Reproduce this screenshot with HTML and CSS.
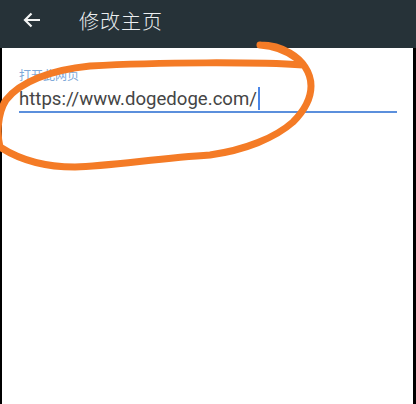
FILE: index.html
```html
<!DOCTYPE html>
<html lang="zh">
<head>
<meta charset="utf-8">
<link rel="stylesheet" href="styles.css">
</head>
<body>
<div class="screen">
  <header class="toolbar">
    <svg class="back" width="18" height="16" viewBox="0 0 18 16"><path d="M17 8H2M8.5 1.5L2 8l6.5 6.5" fill="none" stroke="#f2f4f4" stroke-width="2.2"/></svg>
    <span class="title">修改主页</span>
  </header>
  <main class="content">
    <div class="field">
      <div class="label">打开此网页</div>
      <div class="input"><span class="value">https://www.dogedoge.com/</span><span class="caret"></span></div>
    </div>
  </main>
  <svg class="scribble" width="416" height="404" viewBox="0 0 416 404">
    <path d="M260 45 C275 46 288 52 296 58 C301 62 304 64 303 65 C260 62 160 62 90 66 C50 70 20 82 6 100 C-3 114 -3 135 0 147 C20 160 45 167 75 167 C110 166 160 158 210 155 C245 150 275 138 293 122 C305 110 311 98 311 86 C311 72 302 60 290 53 C280 47 270 45 260 45" fill="none" stroke="#f47b26" stroke-width="7" stroke-linecap="round" stroke-linejoin="round"/>
  </svg>
</div>
</body>
</html>
```
FILE: styles.css
```css
html, body { margin: 0; padding: 0; }
body { width: 416px; height: 404px; overflow: hidden; background: #000; font-family: Roboto, "Noto Sans CJK SC", sans-serif; }
.screen { position: relative; width: 416px; height: 404px; display: flex; flex-direction: column; }
.toolbar { height: 48px; background: #263238; display: flex; align-items: center; padding-left: 23px; box-shadow: 0 1px 2px rgba(0,0,0,0.15); flex: none; }
.back { flex: none; margin-top: -8px; }
.title { color: #eceff1; font-size: 20px; margin-left: 38px; margin-top: -8px; letter-spacing: 1px; font-family: "Noto Sans CJK SC", sans-serif; font-weight: 300; }
.content { flex: 1; background: #fff; margin: 0 3px 0 2px; padding: 19px 17px 0 17px; }
.field { width: 378px; }
.label { color: #7ea9d9; font-size: 12px; line-height: 15px; font-family: "Noto Sans CJK SC", sans-serif; }
.input { display: flex; align-items: flex-end; height: 28px; border-bottom: 2px solid #5b8fdc; margin-top: 1px; }
.value { color: #454545; font-size: 18.6px; line-height: 24px; font-family: Roboto, sans-serif; letter-spacing: 0; }
.caret { width: 2px; height: 23px; background: #4a86e8; margin-left: 1px; margin-bottom: 1px; }
.scribble { position: absolute; left: 0; top: 0; pointer-events: none; }
```
